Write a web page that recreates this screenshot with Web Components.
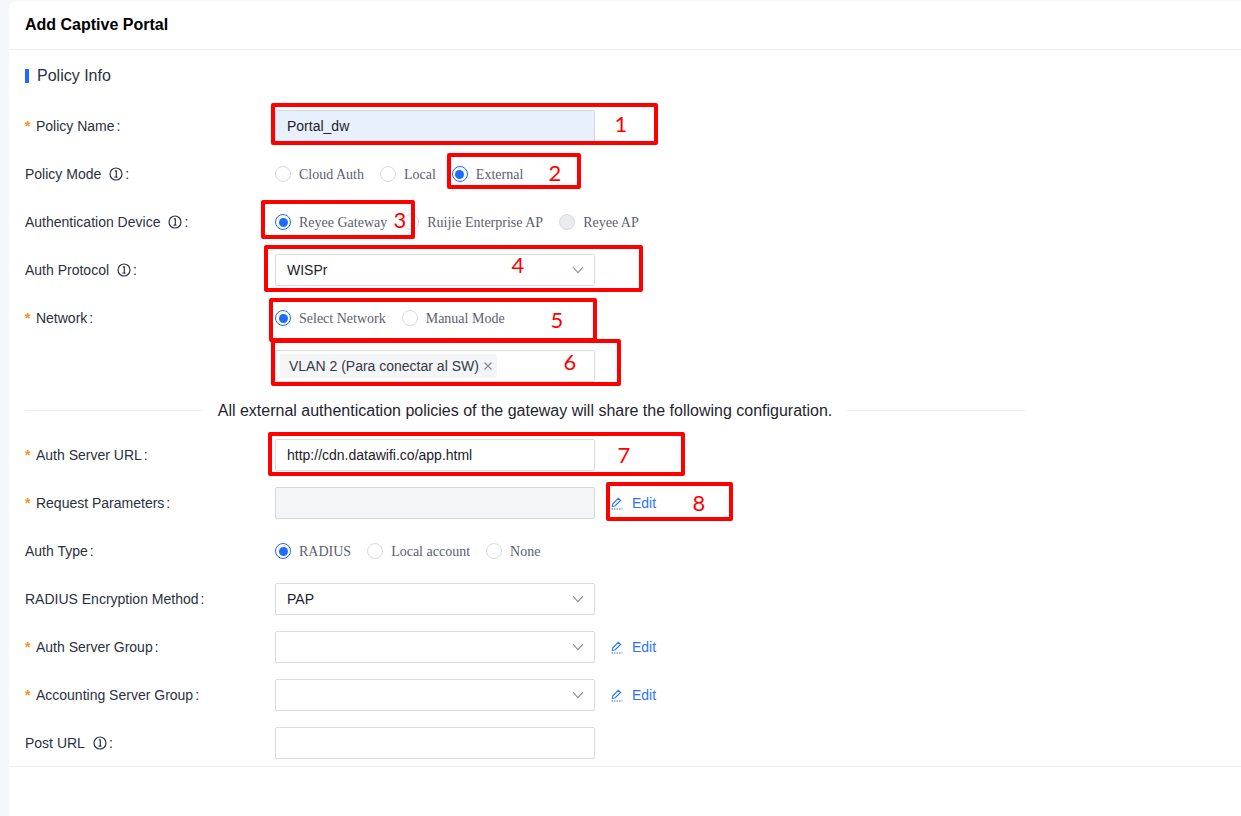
<!DOCTYPE html>
<html>
<head>
<meta charset="utf-8">
<title>Add Captive Portal</title>
<style>
  html, body { margin: 0; height: 100%; overflow: hidden; background: #f5f7fb; }
  body { font-family: "Liberation Sans", Arial, sans-serif; position: relative; }
</style>
</head>
<body>
<captive-card>
  <span slot="title">Add Captive Portal</span>
  <section-title>Policy Info</section-title>

  <form-row label="Policy Name" required><text-box filled>Portal_dw</text-box></form-row>
  <form-row label="Policy Mode" info>
    <radio-option>Cloud Auth</radio-option>
    <radio-option>Local</radio-option>
    <radio-option checked>External</radio-option>
  </form-row>
  <form-row label="Authentication Device" info>
    <radio-option checked>Reyee Gateway</radio-option>
    <radio-option>Ruijie Enterprise AP</radio-option>
    <radio-option disabled>Reyee AP</radio-option>
  </form-row>
  <form-row label="Auth Protocol" info><select-box>WISPr</select-box></form-row>
  <form-row label="Network" required>
    <radio-option checked>Select Network</radio-option>
    <radio-option>Manual Mode</radio-option>
  </form-row>
  <form-row><text-box><tag-chip>VLAN 2 (Para conectar al SW)</tag-chip></text-box></form-row>

  <text-divider>All external authentication policies of the gateway will share the following configuration.</text-divider>

  <form-row label="Auth Server URL" required><text-box>http://cdn.datawifi.co/app.html</text-box></form-row>
  <form-row label="Request Parameters" required><text-box disabled></text-box><edit-link>Edit</edit-link></form-row>
  <form-row label="Auth Type">
    <radio-option checked>RADIUS</radio-option>
    <radio-option>Local account</radio-option>
    <radio-option>None</radio-option>
  </form-row>
  <form-row label="RADIUS Encryption Method"><select-box>PAP</select-box></form-row>
  <form-row label="Auth Server Group" required><select-box></select-box><edit-link>Edit</edit-link></form-row>
  <form-row label="Accounting Server Group" required><select-box></select-box><edit-link>Edit</edit-link></form-row>
  <form-row label="Post URL" info><text-box></text-box></form-row>
</captive-card>

<!-- red callouts drawn over the screenshot -->
<call-out n="1" style="left:271px;top:103px;width:387px;height:42px;--nx:346px;--ny:17px"></call-out>
<call-out n="2" style="left:447px;top:153px;width:134px;height:36px;--nx:104px;--ny:16px"></call-out>
<call-out n="3" style="left:261px;top:200px;width:154px;height:39px;--nx:135px;--ny:16px"></call-out>
<call-out n="4" style="left:264px;top:245px;width:379px;height:47px;--nx:250px;--ny:16px"></call-out>
<call-out n="5" style="left:269px;top:298px;width:328px;height:44px;--nx:284px;--ny:18px"></call-out>
<call-out n="6" style="left:271px;top:339px;width:350px;height:47px;--nx:295px;--ny:19px"></call-out>
<call-out n="7" style="left:268px;top:432px;width:417px;height:44px;--nx:352px;--ny:19px"></call-out>
<call-out n="8" style="left:606px;top:482px;width:127px;height:39px;--nx:89px;--ny:17px"></call-out>

<script>
const INFO_ICON = `
<svg width="14" height="14" viewBox="0 0 14 14" fill="none" stroke="#2f3440">
  <circle cx="7" cy="7" r="6" stroke-width="1.2"/>
  <path d="M5.800 3.800h1.500v6M5.500 10.200h3" stroke-width="1.200"/>
</svg>`;

class CaptiveCard extends HTMLElement {
  constructor() {
    super();
    this.attachShadow({ mode: "open" });
    this.shadowRoot.innerHTML = `
<style>
  :host { display: block; margin: 1px 0 0 9px; height: 815px; background: #fff; border-top-left-radius: 8px; color: #1f2430; }
  header { height: 48px; padding-left: 16px; display: flex; align-items: center; border-bottom: 1px solid #eceef2; font-size: 16px; font-weight: bold; color: #000; }
  main { padding: 14px 0 0 16px; border-bottom: 1px solid #eceef2; }
</style>
<header><slot name="title"></slot></header>
<main><slot></slot></main>
`;
  }
}

class SectionTitle extends HTMLElement {
  constructor() {
    super();
    this.attachShadow({ mode: "open" });
    this.shadowRoot.innerHTML = `
<style>
  :host { display: flex; align-items: center; gap: 8px; height: 24px; margin-bottom: 22px; font-size: 16px; color: #2a3040; }
  i { width: 4px; height: 14px; background: #1f6bff; }
</style>
<i></i><span><slot></slot></span>
`;
  }
}

class FormRow extends HTMLElement {
  constructor() {
    super();
    this.attachShadow({ mode: "open" });
    this.shadowRoot.innerHTML = `
<style>
  :host { display: flex; align-items: center; height: 32px; margin-bottom: 16px; font-size: 14px; color: #2b3140; }
  :host(:last-child) { margin-bottom: 7px; }
  .label { width: 250px; flex: none; display: flex; align-items: center; white-space: pre; }
  .star { color: #fb930f; font-weight: bold; margin-right: 5.500px; }
  svg { margin-left: 8px; display: block; }
  .colon { margin-left: 2px; }
  .field { display: flex; align-items: center; }
</style>
<div class="label"></div>
<div class="field"><slot></slot></div>
`;
  }

  connectedCallback() {
    const label = this.getAttribute("label");
    if (!label) return;
    const star = this.hasAttribute("required") ? `<span class="star">*</span>` : "";
    const info = this.hasAttribute("info") ? INFO_ICON : "";
    this.shadowRoot.querySelector(".label").innerHTML =
      `${star}<span>${label}</span>${info}<span class="colon">:</span>`;
  }
}

class TextBox extends HTMLElement {
  constructor() {
    super();
    this.attachShadow({ mode: "open" });
    this.shadowRoot.innerHTML = `
<style>
  :host { display: flex; align-items: center; box-sizing: border-box; width: 320px; height: 32px; padding: 0 11px; border: 1px solid #d9dce3; border-radius: 2px; background: #fff; font-size: 14px; color: #1d2129; }
  :host([filled]) { background: #e8f0fe; border-color: #d0d6e4; }
  :host([disabled]) { background: #f4f5f8; border-color: #d5d8df; }
</style>
<slot></slot>
`;
  }
}

class SelectBox extends HTMLElement {
  constructor() {
    super();
    this.attachShadow({ mode: "open" });
    this.shadowRoot.innerHTML = `
<style>
  :host { display: flex; align-items: center; justify-content: space-between; box-sizing: border-box; width: 320px; height: 32px; padding: 0 10px 0 11px; border: 1px solid #d9dce3; border-radius: 2px; background: #fff; font-size: 14px; color: #1d2129; }
  svg { display: block; }
</style>
<span><slot></slot></span>
<svg width="12" height="8" viewBox="0 0 12 8" fill="none" stroke="#8b909b" stroke-width="1.1"><path d="M1 1.200 6 6.600l5-5.400"/></svg>
`;
  }
}

class RadioOption extends HTMLElement {
  constructor() {
    super();
    this.attachShadow({ mode: "open" });
    this.shadowRoot.innerHTML = `
<style>
  :host { display: inline-flex; align-items: center; gap: 8px; margin-right: 16px; font-family: "Liberation Serif", "Times New Roman", serif; font-size: 14px; color: #5b6070; white-space: nowrap; }
  i { box-sizing: border-box; width: 16px; height: 16px; border: 1px solid #d9dbe0; border-radius: 50%; background: #fff; display: flex; align-items: center; justify-content: center; }
  span { padding-top: 2px; }
  :host([checked]) i { border-color: #1f6bff; }
  :host([checked]) i::after { content: ""; width: 9px; height: 9px; border-radius: 50%; background: #1f6bff; }
  :host([disabled]) i { background: #eaebee; }
</style>
<i></i><span><slot></slot></span>
`;
  }
}

class TagChip extends HTMLElement {
  constructor() {
    super();
    this.attachShadow({ mode: "open" });
    this.shadowRoot.innerHTML = `
<style>
  :host { display: inline-flex; align-items: center; gap: 4px; height: 24px; margin-left: -7px; padding: 0 4px 0 9px; background: #f4f5f6; border-radius: 2px; color: #333948; white-space: nowrap; }
  svg { display: block; }
</style>
<span><slot></slot></span>
<svg width="10" height="10" viewBox="0 0 10 10" fill="none" stroke="#858a94" stroke-width="1.1"><path d="M1.500 1.500l7 7M8.500 1.500l-7 7"/></svg>
`;
  }
}

class TextDivider extends HTMLElement {
  constructor() {
    super();
    this.attachShadow({ mode: "open" });
    this.shadowRoot.innerHTML = `
<style>
  :host { display: flex; align-items: center; width: 1000px; height: 21px; margin: 18px 0 18px; font-size: 16px; color: #1f2430; white-space: nowrap; }
  i { flex: 1; height: 1px; background: #eeeff3; }
  span { padding: 0 15px; }
</style>
<i></i><span><slot></slot></span><i></i>
`;
  }
}

class EditLink extends HTMLElement {
  constructor() {
    super();
    this.attachShadow({ mode: "open" });
    this.shadowRoot.innerHTML = `
<style>
  :host { display: inline-flex; align-items: center; gap: 9px; margin-left: 16px; font-size: 14px; color: #2c74f6; }
  svg { display: block; }
</style>
<svg width="12" height="13" viewBox="0 0 12 13" fill="none" stroke="#2c74f6" stroke-width="1.100">
  <path d="M1.200 9.300 1.800 6.800 7.300 1.300 9.600 3.500 4 9 1.200 9.300Z"/>
  <path d="M0.500 12h11" stroke-dasharray="1.500 1" stroke-width="1.200"/>
</svg>
<span><slot></slot></span>
`;
  }
}

class CallOut extends HTMLElement {
  constructor() {
    super();
    this.attachShadow({ mode: "open" });
    this.shadowRoot.innerHTML = `
<style>
  :host { position: absolute; box-sizing: border-box; border: 4px solid #f00; border-radius: 2px; }
  span { position: absolute; left: var(--nx); top: var(--ny); transform: translate(-50%, -50%); font-family: Lato, "Open Sans", sans-serif; font-size: 22px; line-height: 1; color: #f00; }
</style>
<span></span>
`;
  }

  connectedCallback() {
    this.shadowRoot.querySelector("span").textContent = this.getAttribute("n");
  }
}

customElements.define("captive-card", CaptiveCard);
customElements.define("section-title", SectionTitle);
customElements.define("form-row", FormRow);
customElements.define("text-box", TextBox);
customElements.define("select-box", SelectBox);
customElements.define("radio-option", RadioOption);
customElements.define("tag-chip", TagChip);
customElements.define("text-divider", TextDivider);
customElements.define("edit-link", EditLink);
customElements.define("call-out", CallOut);
</script>
</body>
</html>
